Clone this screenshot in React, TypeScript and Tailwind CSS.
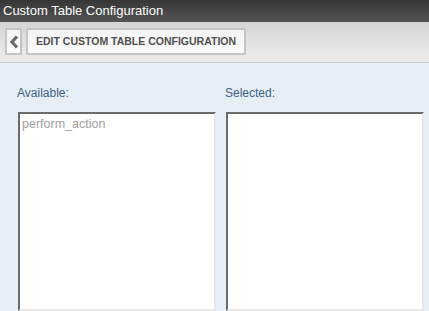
const font = { fontFamily: '"Liberation Sans", Arial, sans-serif' };

function ListBox({ items }: { items: string[] }) {
    return (
        <div className="flex-1 h-[196px] bg-white border-2 border-t-[#6b6b6b] border-l-[#6b6b6b] border-r-[#e6e6e6] border-b-[#e6e6e6] pl-[2px] pt-[3px]">
            {items.map((item) => (
                <div key={item} className="text-[12.5px] leading-[15px] text-[#a0a0a0]">
                    {item}
                </div>
            ))}
        </div>
    );
}

export default function App() {
    return (
        <div className="w-[429px] h-[311px] overflow-hidden flex flex-col bg-[#e6eef6]" style={font}>
            <div className="h-[22px] bg-gradient-to-b from-[#363636] to-[#545454] text-white text-[13px] leading-[22px] pl-[3px]">
                Custom Table Configuration
            </div>
            <div className="h-[41px] bg-gradient-to-b from-[#d5d5d5] to-[#ededed] border-b border-[#cdcdcd] flex items-start gap-[4px] pl-[5px] pt-[6px]">
                <button className="w-[17px] h-[27px] border-2 border-[#c4c4c4] bg-gradient-to-b from-[#f4f4f4] to-[#fbfbfb] flex items-center justify-center">
                    <svg width="10" height="14" viewBox="0 0 10 14">
                        <path d="M8 1.5 L3 7 L8 12.5" fill="none" stroke="#6a6a6a" strokeWidth="3.2" />
                    </svg>
                </button>
                <button className="h-[27px] px-[8px] border-2 border-[#c4c4c4] bg-gradient-to-b from-[#f4f4f4] to-[#fbfbfb] text-[10.5px] font-bold text-[#4f4f4f]">
                    EDIT CUSTOM TABLE CONFIGURATION
                </button>
            </div>
            <div className="flex-1 flex gap-[10px] pl-[18px] pr-[5px] pt-[23px]">
                <div className="flex-1 flex flex-col">
                    <div className="text-[12px] leading-[14px] text-[#3f5f86] mb-[12px] -ml-[1px]">Available:</div>
                    <ListBox items={['perform_action']} />
                </div>
                <div className="flex-1 flex flex-col">
                    <div className="text-[12px] leading-[14px] text-[#3f5f86] mb-[12px] -ml-[1px]">Selected:</div>
                    <ListBox items={[]} />
                </div>
            </div>
        </div>
    );
}
